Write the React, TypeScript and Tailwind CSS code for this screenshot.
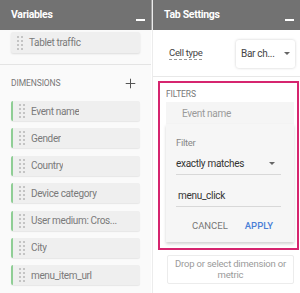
import { Plus } from "lucide-react";

const dims = ["Event name", "Gender", "Country", "Device category", "User medium: Cros...", "City", "menu_item_url"];

function Grip() {
  return (
    <div className="grid grid-cols-2 gap-x-[2px] gap-y-[2px] shrink-0">
      {Array.from({ length: 8 }).map((_, i) => (
        <span key={i} className="w-[2px] h-[2px] bg-[#c4c4c4]" />
      ))}
    </div>
  );
}

function Chip({ label }: { label: string }) {
  return (
    <div className="h-[20px] flex items-center gap-[6px] pl-[6px] bg-[#efefef] rounded-[2px] border-l-2 border-[#8fce95] shadow-[0_1px_1px_rgba(0,0,0,0.08)]">
      <Grip />
      <span className="text-[10px] tracking-[-0.35px] text-[#7a7a7a] truncate">{label}</span>
    </div>
  );
}

function PanelHeader({ title }: { title: string }) {
  return (
    <div className="h-[30px] bg-[#727272] flex items-center justify-between pl-[11px] pr-[6px]">
      <span className="text-[10.5px] tracking-[-0.3px] font-bold text-white">{title}</span>
      <span className="w-[9px] h-[2px] bg-white mt-[10px]" />
    </div>
  );
}

function Caret() {
  return (
    <svg width="6" height="3" viewBox="0 0 6 3">
      <path d="M0 0h6L3 3z" fill="#666" />
    </svg>
  );
}

export default function App() {
  return (
    <div className="w-[300px] h-[293px] flex bg-white overflow-hidden" style={{ fontFamily: "Roboto, sans-serif" }}>
      {/* Variables */}
      <div className="w-[151px] flex flex-col bg-[#fafafa]">
        <PanelHeader title="Variables" />
        <div className="px-[11px] pt-[2px] pb-[11px] border-b border-[#e4e4e4]">
          <div className="h-[21px] flex items-center gap-[6px] pl-[6px] bg-[#efefef] rounded-[2px] shadow-[0_1px_2px_rgba(0,0,0,0.12)]">
            <Grip />
            <span className="text-[10px] tracking-[-0.35px] text-[#7a7a7a]">Tablet traffic</span>
          </div>
        </div>
        <div className="flex items-center justify-between pl-[11px] pr-[13px] h-[36px]">
          <span className="text-[8.5px] tracking-[-0.1px] text-[#777]">DIMENSIONS</span>
          <Plus className="w-[15px] h-[15px] text-[#555]" strokeWidth={1.6} />
        </div>
        <div className="flex flex-col gap-[7.4px] px-[11px]">
          {dims.map((d) => (
            <Chip key={d} label={d} />
          ))}
        </div>
      </div>

      <div className="w-px bg-[#a0a0a0] h-[30px]" />

      {/* Tab Settings */}
      <div className="flex-1 flex flex-col bg-white border-l border-[#ececec]">
        <PanelHeader title="Tab Settings" />
        <div className="h-[47px] flex items-center justify-between pl-[16px] pr-[5px] pt-[1px] border-b border-[#e8e8e8]">
          <span className="text-[9.5px] tracking-[-0.3px] text-[#444] underline decoration-dashed decoration-[#999] underline-offset-[3px]">Cell type</span>
          <div className="w-[59px] h-[28px] flex items-center justify-between pl-[5px] pr-[5px] rounded-[3px] shadow-[0_0_3px_rgba(0,0,0,0.2)]">
            <span className="text-[10px] tracking-[-0.3px] text-[#444] whitespace-nowrap">Bar ch...</span>
            <Caret />
          </div>
        </div>
        <div className="mt-[4px] ml-[5px] mr-[1px] border-2 border-[#d6256f] pl-[6px] pr-[3px] pt-[3px] pb-[6px]">
          <div className="text-[8.5px] tracking-[-0.1px] text-[#777] h-[16px] flex items-center">FILTERS</div>
          <div className="h-[22px] bg-[#f5f5f5] flex items-center pl-[16px] text-[10px] tracking-[-0.3px] text-[#9a9a9a]">Event name</div>
          <div className="bg-[#f6f6f6] shadow-[0_2px_3px_rgba(0,0,0,0.18)] px-[10px] pt-[12px] pb-[8px]">
            <div className="text-[9.5px] tracking-[-0.3px] text-[#888]">Filter</div>
            <div className="mt-[3px] h-[22px] flex items-center justify-between border-b border-[#d8d8d8] pr-[6px] w-[105px]">
              <span className="text-[10px] tracking-[-0.3px] text-[#333]">exactly matches</span>
              <Caret />
            </div>
            <div className="mt-[10px] h-[22px] flex items-center border-b border-[#d8d8d8] w-[105px]">
              <span className="text-[10px] tracking-[-0.3px] text-[#333] pl-[2px]">menu_click</span>
            </div>
            <div className="mt-[12px] flex items-center justify-end gap-[17px] pr-[11px]">
              <span className="text-[9.5px] text-[#777]">CANCEL</span>
              <span className="text-[9.5px] font-medium text-[#4a7fd6]">APPLY</span>
            </div>
          </div>
        </div>
        <div className="mt-[5px] ml-[14px] mr-[6px] h-[29px] border border-[#ececec] rounded-[2px] flex flex-col items-center justify-center text-[9.5px] tracking-[-0.2px] leading-[11px] text-[#9a9a9a] text-center">
          <span>Drop or select dimension or</span>
          <span>metric</span>
        </div>
      </div>
    </div>
  );
}
